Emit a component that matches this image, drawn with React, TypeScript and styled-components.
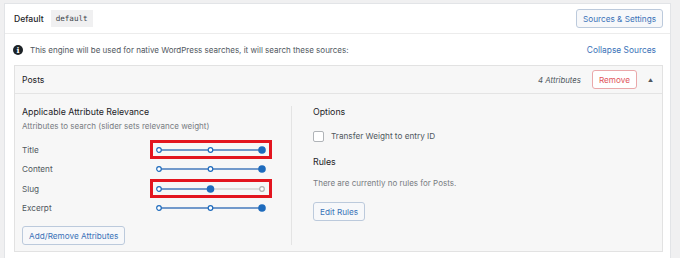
import styled, { createGlobalStyle } from "styled-components";

const Global = createGlobalStyle`
body {
  margin: 0;
  background: #f0f0f1;
  font-family: Inter, "Liberation Sans", sans-serif;
  color: #3c434a;
}
`

const attributes = [
  { name: "Title", value: 2, boxed: true },
  { name: "Content", value: 2, boxed: false },
  { name: "Slug", value: 1, boxed: true },
  { name: "Excerpt", value: 2, boxed: false },
]

const Slider = ({ value }: { value: number }) => {
  const xs = [4, 55.5, 107]
  return (
    <svg width="112" height="10" viewBox="0 0 112 10">
      <line x1={4} y1={5} x2={107} y2={5} stroke="#d5d5d5" strokeWidth={1.6} />
      <line x1={4} y1={5} x2={xs[value]} y2={5} stroke="#4c82c4" strokeWidth={1.6} />
      {xs.map((x, i) =>
        i === value ? (
          <circle key={i} cx={x} cy={5} r={3.8} fill="#1e6bbd" />
        ) : (
          <circle key={i} cx={x} cy={5} r={2.3} fill="#fff" stroke={i < value ? "#1e6bbd" : "#b0b0b0"} strokeWidth={1.2} />
        )
      )}
    </svg>
  )
}

export default function App() {
  return (
    <Page>
      <Global />
      <Card>
        <Header>
          <Name>Default</Name>
          <Code>default</Code>
          <Spacer />
          <Button>Sources &amp; Settings</Button>
        </Header>
        <Info>
          <InfoIcon>i</InfoIcon>
          <span>This engine will be used for native WordPress searches, it will search these sources:</span>
          <Spacer />
          <Link>Collapse Sources</Link>
        </Info>
        <Source>
          <SourceHead>
            <Title>Posts</Title>
            <Spacer />
            <Count>4 Attributes</Count>
            <Button danger>Remove</Button>
            <Toggle>▲</Toggle>
          </SourceHead>
          <SourceBody>
            <Left>
              <Heading>Applicable Attribute Relevance</Heading>
              <Note>Attributes to search (slider sets relevance weight)</Note>
              <Rows>
                {attributes.map(a => (
                  <Row key={a.name}>
                    <Label>{a.name}</Label>
                    <SliderBox boxed={a.boxed}>
                      <Slider value={a.value} />
                    </SliderBox>
                  </Row>
                ))}
              </Rows>
              <Button>Add/Remove Attributes</Button>
            </Left>
            <Right>
              <Heading>Options</Heading>
              <Check>
                <Box />
                <span>Transfer Weight to entry ID</span>
              </Check>
              <Heading>Rules</Heading>
              <RuleNote>There are currently no rules for Posts.</RuleNote>
              <Button>Edit Rules</Button>
            </Right>
          </SourceBody>
        </Source>
      </Card>
    </Page>
  )
}

const Page = styled.div`
padding: 3px 9px 0 4px;
`
const Card = styled.div`
background: #fff;
border: 1px solid #e2e4e7;
padding-bottom: 20px;
`
const Spacer = styled.div`
flex: 1;
`
const Header = styled.div`
height: 29px;
display: flex;
align-items: center;
padding: 0 7px 0 9px;
border-bottom: 1px solid #ececec;
`
const Name = styled.div`
font-size: 8.6px;
font-weight: 500;
color: #1d2327;
`
const Code = styled.code`
margin-left: 7px;
background: #f0f0f1;
padding: 4px 5px;
font-family: "DejaVu Sans Mono", monospace;
font-size: 7.6px;
color: #3c434a;
`
const Button = styled.button<{ danger?: boolean }>`
height: 19px;
padding: 0 6px;
font-family: inherit;
font-size: 8.2px;
color: ${({ danger }) => (danger ? "#e0545a" : "#3a72b8")};
background: ${({ danger }) => (danger ? "#fff" : "#f7f8fa")};
border: 1px solid ${({ danger }) => (danger ? "#eaa8aa" : "#bccadc")};
border-radius: 3px;
`
const Info = styled.div`
height: 31px;
display: flex;
align-items: center;
padding: 0 14px 0 8px;
font-size: 8px;
color: #50575e;
`
const InfoIcon = styled.div`
width: 10px;
height: 10px;
border-radius: 50%;
background: #1d2327;
color: #fff;
font-size: 8px;
font-weight: 700;
font-family: "DejaVu Serif", serif;
display: flex;
align-items: center;
justify-content: center;
margin-right: 7px;
`
const Link = styled.span`
color: #3a72b8;
font-size: 8.4px;
`
const Source = styled.div`
margin: 0 7px 0 9px;
border: 1px solid #e2e2e2;
background: #f7f7f7;
`
const SourceHead = styled.div`
height: 27px;
display: flex;
align-items: center;
gap: 11px;
padding: 0 9px 0 7px;
border-bottom: 1px solid #e4e4e4;
`
const Title = styled.div`
font-size: 8.6px;
color: #1d2327;
`
const Count = styled.div`
font-size: 7.8px;
font-style: italic;
color: #50575e;
`
const Toggle = styled.div`
font-size: 5px;
color: #50575e;
`
const SourceBody = styled.div`
display: flex;
padding: 12px 0 6px 7px;
`
const Left = styled.div`
width: 269px;
border-right: 1px solid #e4e4e4;
display: flex;
flex-direction: column;
align-items: flex-start;
`
const Right = styled.div`
padding-left: 21px;
display: flex;
flex-direction: column;
align-items: flex-start;
`
const Heading = styled.div`
font-size: 8.8px;
line-height: 12px;
color: #1d2327;
`
const Note = styled.div`
font-size: 8px;
line-height: 12px;
color: #787c82;
margin: 2px 0 8px;
`
const RuleNote = styled(Note)`
margin: 9px 0 13px;
`
const Rows = styled.div`
display: flex;
flex-direction: column;
margin-bottom: 8px;
`
const Row = styled.div`
height: 19.5px;
display: flex;
align-items: center;
`
const Label = styled.div`
width: 128px;
font-size: 8.2px;
color: #50575e;
`
const SliderBox = styled.div<{ boxed: boolean }>`
width: 116px;
height: 13px;
display: flex;
align-items: center;
justify-content: center;
border: 3px solid ${({ boxed }) => (boxed ? "#e3151f" : "transparent")};
`
const Check = styled.div`
display: flex;
align-items: center;
gap: 7px;
font-size: 8.2px;
line-height: 12px;
color: #50575e;
margin: 12px 0 14px;
`
const Box = styled.div`
width: 9px;
height: 9px;
border: 1px solid #b0b4b8;
border-radius: 2px;
background: #fff;
`
